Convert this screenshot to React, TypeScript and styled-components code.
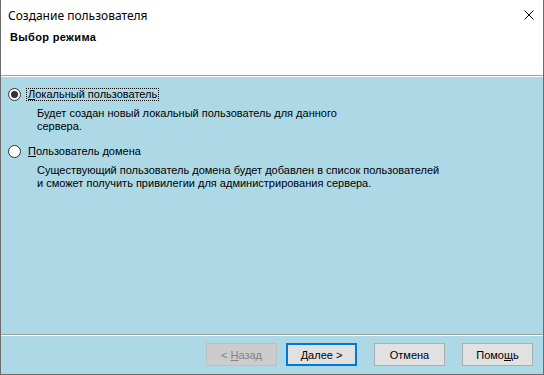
import React from "react";
import styled, { createGlobalStyle } from "styled-components";

const Global = createGlobalStyle`
  html, body { margin: 0; padding: 0; background: #fff; }
  body { font-family: Tahoma, "Liberation Sans", Arial, sans-serif; }
`;

const Window = styled.div`
  box-sizing: border-box;
  width: 544px;
  height: 375px;
  display: flex;
  flex-direction: column;
  border: 1px solid #6b6b6b;
  border-top: none;
  background: #fff;
  overflow: hidden;
`;

const TitleBar = styled.div`
  height: 30px;
  display: flex;
  align-items: center;
  justify-content: space-between;
  padding-left: 7px;
  font-family: "Segoe UI", "Noto Sans", "Liberation Sans", sans-serif;
  font-size: 12px;
  color: #000;
`;

const CloseBtn = styled.div`
  width: 28px;
  height: 30px;
  display: flex;
  align-items: center;
  justify-content: center;
`;

const Header = styled.div`
  height: 45px;
  padding: 1px 0 0 9px;
  font-size: 11px;
  font-weight: bold;
  letter-spacing: 0.35px;
  color: #000;
  line-height: 13px;
  box-sizing: border-box;
`;

const Separator = styled.div`
  height: 1px;
  background: #a0a0a0;
  border-bottom: 1px solid #fff;
`;

const Body = styled.div`
  flex: 1;
  background: #add8e6;
  display: flex;
  flex-direction: column;
`;

const Content = styled.div`
  flex: 1;
  padding: 11px 0 0 7px;
  font-size: 11px;
  color: #000;
`;

const Option = styled.div<{ $gap: number }>`
  margin-bottom: ${(p) => p.$gap}px;
`;

const RadioRow = styled.div`
  display: flex;
  align-items: center;
  height: 13px;
`;

const Radio = styled.div<{ $checked?: boolean }>`
  box-sizing: border-box;
  width: 13px;
  height: 13px;
  border-radius: 50%;
  border: 1px solid #333;
  background: #fff;
  display: flex;
  align-items: center;
  justify-content: center;
  &::after {
    content: "";
    display: ${(p) => (p.$checked ? "block" : "none")};
    width: 7px;
    height: 7px;
    border-radius: 50%;
    background: #333;
  }
`;

const Label = styled.span<{ $focus?: boolean }>`
  margin-left: 6px;
  padding: 0 1px;
  line-height: 11px;
  outline: ${(p) => (p.$focus ? "1px dotted #000" : "none")};
  white-space: nowrap;
`;

const U = styled.span`
  text-decoration: underline;
`;

const Desc = styled.div`
  margin: 6px 0 0 29px;
  line-height: 13px;
`;

const Footer = styled.div`
  height: 38px;
  display: flex;
  align-items: flex-start;
  justify-content: flex-end;
  padding: 7px 10px 0 0;
  box-sizing: border-box;
`;

const Button = styled.div<{ $default?: boolean; $disabled?: boolean; $gap: number }>`
  box-sizing: border-box;
  width: 71px;
  height: 23px;
  margin-left: ${(p) => p.$gap}px;
  background: ${(p) => (p.$disabled ? "#cccccc" : "#e1e1e1")};
  border: ${(p) => (p.$default ? "2px solid #0078d7" : p.$disabled ? "1px solid #bfbfbf" : "1px solid #adadad")};
  color: ${(p) => (p.$disabled ? "#838383" : "#000")};
  font-size: 11px;
  display: flex;
  align-items: center;
  justify-content: center;
`;

export default function App() {
  return (
    <>
      <Global />
      <Window>
        <TitleBar>
          <span>Создание пользователя</span>
          <CloseBtn>
            <svg width="10" height="10" viewBox="0 0 10 10">
              <path d="M0.5 0.5 L9.5 9.5 M9.5 0.5 L0.5 9.5" stroke="#000" strokeWidth="1" />
            </svg>
          </CloseBtn>
        </TitleBar>
        <Header>Выбор режима</Header>
        <Separator />
        <Body>
          <Content>
            <Option $gap={12}>
              <RadioRow>
                <Radio $checked />
                <Label $focus>
                  <U>Л</U>окальный пользователь
                </Label>
              </RadioRow>
              <Desc>
                Будет создан новый локальный пользователь для данного
                <br />
                сервера.
              </Desc>
            </Option>
            <Option $gap={0}>
              <RadioRow>
                <Radio />
                <Label>
                  <U>П</U>ользователь домена
                </Label>
              </RadioRow>
              <Desc>
                Существующий пользователь домена будет добавлен в список пользователей
                <br />
                и сможет получить привилегии для администрирования сервера.
              </Desc>
            </Option>
          </Content>
          <Separator />
          <Footer>
            <Button $disabled $gap={0}>
              &lt;&nbsp;<U>Н</U>азад
            </Button>
            <Button $default $gap={9}>
              <U>Д</U>алее &gt;
            </Button>
            <Button $gap={17}>Отмена</Button>
            <Button $gap={17}>
              Помо<U>щ</U>ь
            </Button>
          </Footer>
        </Body>
      </Window>
    </>
  );
}
